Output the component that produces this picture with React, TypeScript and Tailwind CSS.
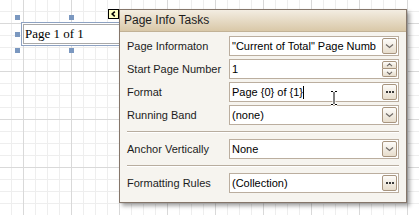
import React from "react";

const Chevron = () => (
  <svg width="9" height="6" viewBox="0 0 9 6" className="block">
    <path d="M1 1.5 L4.5 4.5 L8 1.5" fill="none" stroke="#6f6a66" strokeWidth="1.2" />
  </svg>
);

const Dots = () => (
  <div className="flex gap-[1px]">
    <span className="w-[2px] h-[2px] bg-[#3a3a3a]" />
    <span className="w-[2px] h-[2px] bg-[#3a3a3a]" />
    <span className="w-[2px] h-[2px] bg-[#3a3a3a]" />
  </div>
);

const btn =
  "flex items-center justify-center rounded-[2px] border border-[#a8957f] bg-gradient-to-b from-[#fdfcfa] to-[#e7ddcc]";

type Kind = "combo" | "spin" | "dots";

const Field: React.FC<{ text: string; kind: Kind; caret?: boolean }> = ({ text, kind, caret }) => (
  <div className="flex-1 h-[20px] flex items-center border border-[#bbae9f] bg-white pl-[2px] pr-px">
    <div className="flex-1 flex items-center overflow-hidden whitespace-nowrap text-black">
      {text}
      {caret && <span className="w-px h-[13px] bg-black" />}
    </div>
    {kind === "spin" ? (
      <div className="flex flex-col w-[15px] h-[16px]">
        <div className={`${btn} h-[8px] rounded-b-none`}>
          <svg width="7" height="4" viewBox="0 0 7 4">
            <path d="M1 3.2 L3.5 0.8 L6 3.2" fill="none" stroke="#6f6a66" strokeWidth="1.1" />
          </svg>
        </div>
        <div className={`${btn} h-[8px] rounded-t-none border-t-0`}>
          <svg width="7" height="4" viewBox="0 0 7 4">
            <path d="M1 0.8 L3.5 3.2 L6 0.8" fill="none" stroke="#6f6a66" strokeWidth="1.1" />
          </svg>
        </div>
      </div>
    ) : (
      <div className={`${btn} w-[15px] h-[16px]`}>{kind === "combo" ? <Chevron /> : <Dots />}</div>
    )}
  </div>
);

const Row: React.FC<{ label: string; text: string; kind: Kind; caret?: boolean }> = (p) => (
  <div className="flex items-center h-[20px]">
    <div className="w-[102px] text-[#1c1c1c]">{p.label}</div>
    <Field text={p.text} kind={p.kind} caret={p.caret} />
  </div>
);

const Separator = () => <div className="my-[6px] h-[2px] border-t border-[#b8ad9f] border-b border-b-white" />;

export default function App() {
  return (
    <div className="relative w-[419px] h-[215px] overflow-hidden bg-white font-['Liberation_Sans',Arial,sans-serif] text-[11px] leading-[13px] [background-image:linear-gradient(to_right,#d9d9d9_1px,transparent_1px),linear-gradient(to_bottom,#d9d9d9_1px,transparent_1px),linear-gradient(to_right,#eeeeee_1px,transparent_1px),linear-gradient(to_bottom,#eeeeee_1px,transparent_1px)] [background-size:48px_48px,48px_48px,12px_12px,12px_12px] [background-position:23px_23px,23px_23px,11px_11px,11px_11px]">
      {/* selected label control */}
      <div className="absolute left-[21px] top-[22px] w-[110px] h-[24px] border border-[#8ea2c2] bg-white p-px">
        <div className="h-full border border-[#a9a9a9] pl-px pt-px font-['Liberation_Serif','Times_New_Roman',serif] text-[13px] leading-[15px] text-black">
          Page 1 of 1
        </div>
      </div>
      <span className="absolute left-[15px] top-[15px] w-[5px] h-[5px] bg-[#7b98c0]" />
      <span className="absolute left-[15px] top-[32px] w-[5px] h-[5px] bg-[#7b98c0]" />
      <span className="absolute left-[15px] top-[48px] w-[5px] h-[5px] bg-[#7b98c0]" />
      <span className="absolute left-[69px] top-[15px] w-[5px] h-[5px] bg-[#7b98c0]" />
      <span className="absolute left-[69px] top-[48px] w-[5px] h-[5px] bg-[#7b98c0]" />

      {/* smart tag */}
      <div className="absolute left-[108px] top-[9px] w-[11px] h-[10px] border border-black bg-[#ffffc4] flex items-center justify-center">
        <svg width="5" height="6" viewBox="0 0 5 6">
          <path d="M3.8 0.6 L1.2 3 L3.8 5.4" fill="none" stroke="#000" strokeWidth="1.6" />
        </svg>
      </div>

      {/* tasks panel */}
      <div className="absolute left-[119px] top-[9px] w-[288px] h-[194px] border border-[#85766a] bg-[#f6f4ef] shadow-[3px_3px_4px_rgba(0,0,0,0.35)]">
        <div className="h-[22px] flex items-center pl-[4px] text-[12px] text-[#1c1c1c] border-b border-[#c2b296] bg-gradient-to-b from-[#f3ede2] to-[#d9c8a8]">
          Page Info Tasks
        </div>
        <div className="px-[7px] pt-[4px]">
          <div className="flex flex-col gap-[3px]">
            <Row label="Page Informaton" text={'"Current of Total" Page Numb'} kind="combo" />
            <Row label="Start Page Number" text="1" kind="spin" />
            <Row label="Format" text="Page {0} of {1}" kind="dots" caret />
            <Row label="Running Band" text="(none)" kind="combo" />
          </div>
          <Separator />
          <Row label="Anchor Vertically" text="None" kind="combo" />
          <Separator />
          <Row label="Formatting Rules" text="(Collection)" kind="dots" />
        </div>
      </div>

      {/* mouse I-beam */}
      <svg className="absolute left-[330px] top-[90px]" width="8" height="16" viewBox="0 0 8 16">
        <path d="M1 1.5 H3 M5 1.5 H7 M4 2 V14 M1 14.5 H3 M5 14.5 H7" fill="none" stroke="#fff" strokeWidth="3" />
        <path d="M1 1.5 H3 M5 1.5 H7 M4 2 V14 M1 14.5 H3 M5 14.5 H7" fill="none" stroke="#000" strokeWidth="1" />
      </svg>
    </div>
  );
}
